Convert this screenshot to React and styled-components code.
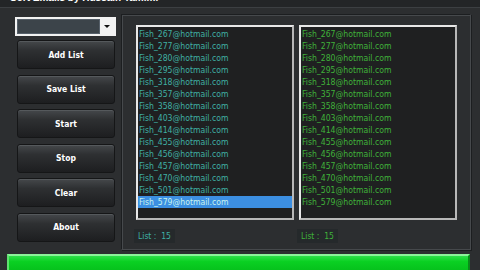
import React from "react";
import styled, { createGlobalStyle } from "styled-components";

const Global = createGlobalStyle`
  html, body { margin: 0; padding: 0; background: #2b2d2f; }
  body { width: 480px; height: 270px; overflow: hidden; font-family: "DejaVu Sans Condensed", "DejaVu Sans", sans-serif; }
`;

const Window = styled.div`
  width: 480px;
  height: 270px;
  background: #2c2e30;
  display: flex;
  flex-direction: column;
  overflow: hidden;
`;

const TitleBar = styled.div`
  height: 8px;
  background: #232527;
  border-bottom: 1px solid #3c3f42;
  overflow: hidden;
  padding-left: 10px;
`;

const Title = styled.div`
  margin-top: -8px;
  color: #ffffff;
  font-weight: bold;
  font-size: 10px;
  line-height: 12px;
  font-family: "Liberation Sans", sans-serif;
`;

const Main = styled.div`
  display: flex;
  height: 246px;
`;

const Side = styled.div`
  width: 121px;
  padding: 9px 0 0 15px;
  box-sizing: border-box;
  display: flex;
  flex-direction: column;
`;

const Combo = styled.div`
  width: 101px;
  height: 19px;
  box-sizing: border-box;
  border: 2px solid #f2f2f2;
  background: #f2f2f2;
  display: flex;
`;

const ComboField = styled.div`
  flex: 1;
  background: #3c444a;
  border: 1px solid #56606a;
`;

const ComboArrow = styled.div`
  width: 14px;
  display: flex;
  align-items: center;
  justify-content: center;
  &::after {
    content: "";
    border-left: 3px solid transparent;
    border-right: 3px solid transparent;
    border-top: 3px solid #111;
  }
`;

const Buttons = styled.div`
  display: flex;
  flex-direction: column;
  gap: 5.6px;
  margin-top: 4px;
  margin-left: 2px;
`;

const Button = styled.div`
  width: 98px;
  height: 29px;
  box-sizing: border-box;
  border-radius: 3px;
  border: 1px solid #151617;
  background: linear-gradient(#45484b 0%, #2e3032 35%, #1d1e20 100%);
  box-shadow: inset 0 1px 0 #55595c;
  color: #ffffff;
  font-weight: bold;
  font-size: 8.5px;
  display: flex;
  align-items: center;
  justify-content: center;
`;

const Group = styled.div`
  margin-top: 6px;
  width: 350px;
  height: 236px;
  box-sizing: border-box;
  border-left: 1px solid #1c1e20;
  border-top: 1px solid #1c1e20;
  border-right: 1px solid #46494c;
  border-bottom: 1px solid #46494c;
  box-shadow: 1px 1px 0 #1c1e20, inset 1px 1px 0 #46494c;
  padding: 10px 0 0 14px;
  display: flex;
  flex-direction: column;
`;

const Lists = styled.div`
  display: flex;
  gap: 5px;
`;

const Column = styled.div`
  display: flex;
  flex-direction: column;
  gap: 9px;
`;

const ListBox = styled.div`
  width: 158px;
  height: 195px;
  box-sizing: border-box;
  border: 2px solid #e8e8e8;
  border-right-color: #b8b8b8;
  border-bottom-color: #b8b8b8;
  background: #1f2021;
  padding-top: 1px;
  display: flex;
  flex-direction: column;
`;

const Item = styled.div`
  height: 12px;
  line-height: 12px;
  font-size: 8.6px;
  padding-left: 1px;
  color: ${(p) => (p.$sel ? "#c8f4ee" : p.$green ? "#3fb23a" : "#3fb0a4")};
  background: ${(p) => (p.$sel ? "#3c8fe2" : "transparent")};
  white-space: nowrap;
`;

const Count = styled.div`
  align-self: flex-start;
  margin-left: -2px;
  padding: 0 4px;
  height: 14px;
  line-height: 14px;
  background: #25292b;
  font-size: 8.5px;
  color: ${(p) => (p.$green ? "#3fb23a" : "#3fb0a4")};
  white-space: pre;
`;

const ProgressWrap = styled.div`
  padding: 4px 10px 0 7px;
`;

const Progress = styled.div`
  height: 16px;
  box-sizing: border-box;
  border-top: 2px solid #8cf29a;
  border-left: 2px solid #60e070;
  border-right: 2px solid #0a8a1a;
  background: linear-gradient(#2ee04a, #0ad022 40%, #06c21c);
`;

const emails = ["267", "277", "280", "295", "318", "357", "358", "403", "414", "455", "456", "457", "470", "501", "579"].map(
  (n) => `Fish_${n}@hotmail.com`
);

export default function App() {
  return (
    <Window>
      <Global />
      <TitleBar>
        <Title>Sort Emails by Hussain Tamimi</Title>
      </TitleBar>
      <Main>
        <Side>
          <Combo>
            <ComboField />
            <ComboArrow />
          </Combo>
          <Buttons>
            {["Add List", "Save List", "Start", "Stop", "Clear", "About"].map((b) => (
              <Button key={b}>{b}</Button>
            ))}
          </Buttons>
        </Side>
        <Group>
          <Lists>
            <Column>
              <ListBox>
                {emails.map((e, i) => (
                  <Item key={e} $sel={i === emails.length - 1}>{e}</Item>
                ))}
              </ListBox>
              <Count>{"List :  15"}</Count>
            </Column>
            <Column>
              <ListBox>
                {emails.map((e) => (
                  <Item key={e} $green>{e}</Item>
                ))}
              </ListBox>
              <Count $green>{"List :  15"}</Count>
            </Column>
          </Lists>
        </Group>
      </Main>
      <ProgressWrap>
        <Progress />
      </ProgressWrap>
    </Window>
  );
}
